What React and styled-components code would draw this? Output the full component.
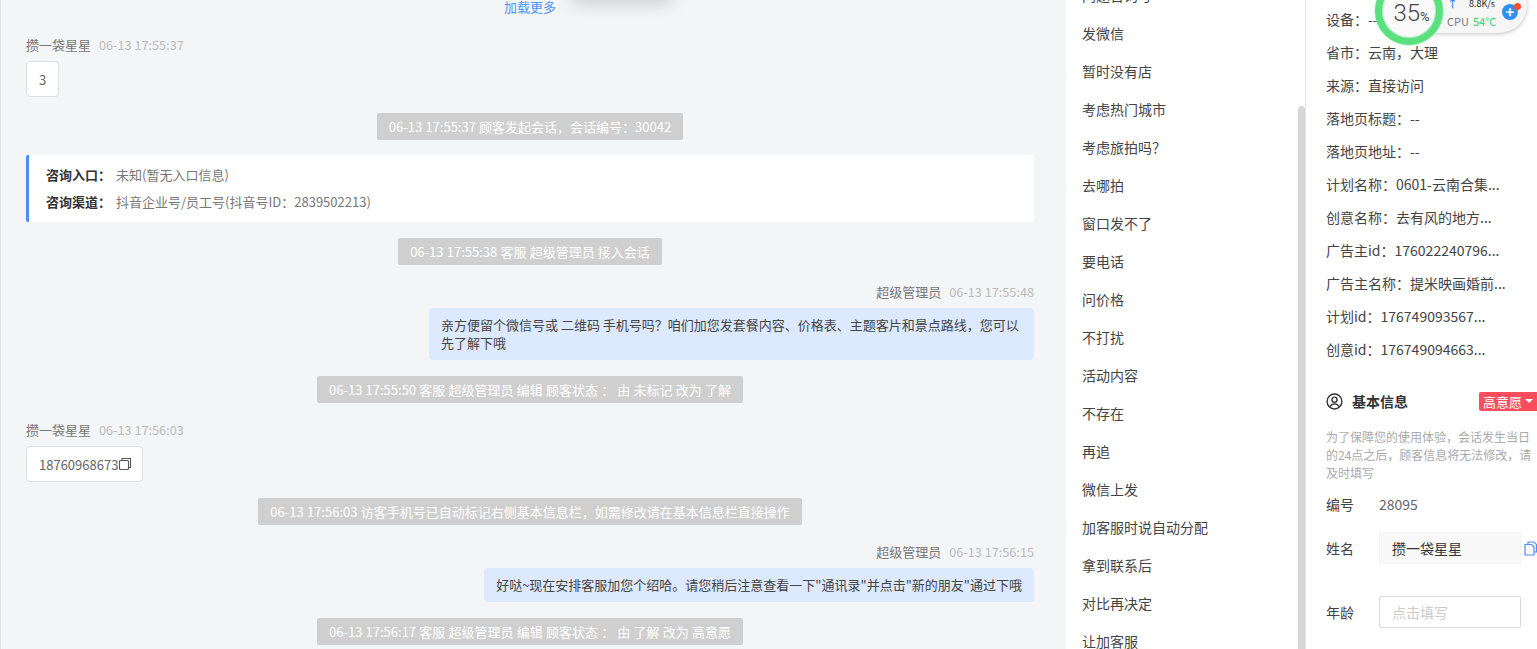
import React from "react";
import styled, { createGlobalStyle } from "styled-components";

// fullwidth punctuation, kept as escapes so it survives editors
const COLON = "\uFF1A";
const COMMA = "\uFF0C";
const QMARK = "\uFF1F";

const quickReplies = [
  "问题咨询号", "发微信", "暂时没有店", "考虑热门城市", `考虑旅拍吗${QMARK}`, "去哪拍", "窗口发不了", "要电话", "问价格",
  "不打扰", "活动内容", "不存在", "再追", "微信上发", "加客服时说自动分配", "拿到联系后", "对比再决定", "让加客服",
];

const visitorInfo = [
  `设备${COLON}--`,
  `省市${COLON}云南${COMMA}大理`,
  `来源${COLON}直接访问`,
  `落地页标题${COLON}--`,
  `落地页地址${COLON}--`,
  `计划名称${COLON}0601-云南合集...`,
  `创意名称${COLON}去有风的地方...`,
  `广告主id${COLON}176022240796...`,
  `广告主名称${COLON}提米映画婚前...`,
  `计划id${COLON}176749093567...`,
  `创意id${COLON}176749094663...`,
];

const GlobalStyle = createGlobalStyle`
  html, body { margin: 0; padding: 0; height: 100%; overflow: hidden; background: #fff; }
  body { font-family: "Noto Sans CJK SC", "Noto Sans", sans-serif; }
  * { box-sizing: border-box; }
`;

const Page = styled.div`
  display: grid;
  grid-template-columns: 1066px 240px 231px;
  height: 649px;
  overflow: hidden;
  position: relative;
`;

const ChatPane = styled.div`
  background: #f4f5f7;
  border-left: 1px solid #e2e2e2;
  padding: 0 32px 0 25px;
  overflow: hidden;
  position: relative;
`;

const TopShadow = styled.div`
  position: absolute;
  left: 575px;
  top: -30px;
  width: 92px;
  height: 30px;
  box-shadow: 0 0 18px 4px rgba(0, 0, 0, 0.16);
`;

const LoadMore = styled.div`
  text-align: center;
  font-size: 13px;
  line-height: 16px;
  color: #4d94ff;
  margin: -1px 0 22px;
`;

const MetaRow = styled.div`
  display: flex;
  gap: 8px;
  align-items: center;
  justify-content: ${(p) => (p.$mine ? "flex-end" : "flex-start")};
  height: 16px;
  padding-bottom: 2px;
  font-size: 13px;
  color: #777;
`;

const MetaTime = styled.span`
  font-size: 12.7px;
  color: #bbb;
`;

const VisitorBubble = styled.div`
  display: inline-flex;
  align-items: center;
  height: 36px;
  margin-top: 8px;
  padding: 0 12px;
  background: #fff;
  border: 1px solid #dcdfe6;
  border-radius: 4px;
  font-size: 13px;
  color: #666;
`;

const MineRow = styled.div`
  display: flex;
  justify-content: flex-end;
  margin-top: 8px;
`;

const MineBubble = styled.div`
  max-width: 605px;
  padding: 8px 12px;
  background: #dce9fe;
  border-radius: 4px;
  font-size: 13px;
  line-height: 18px;
  color: #444;
`;

const NoticeRow = styled.div`
  display: flex;
  justify-content: center;
  margin-top: ${(p) => p.$top}px;
`;

const Notice = styled.div`
  height: 27px;
  line-height: 27px;
  padding: 0 12px;
  background: #cfcfcf;
  border-radius: 2px;
  font-size: 13px;
  word-spacing: 0.3px;
  color: #fff;
  white-space: nowrap;
`;

const Entry = styled.div`
  margin-top: 15px;
  height: 67px;
  padding: 6px 17px;
  background: #fff;
  border-left: 3px solid #4d8dff;
  border-radius: 2px 0 0 2px;
  font-size: 13px;
  color: #777;
`;

const EntryLine = styled.div`
  height: 27px;
  line-height: 27px;
  b { color: #333; font-weight: 700; margin-right: 5px; }
`;

const Block = styled.div`
  margin-top: ${(p) => p.$top}px;
`;

const CopyGlyph = styled.svg`
  width: 14px;
  height: 14px;
  flex: none;
  margin-right: -2px;
`;

const MiddlePane = styled.div`
  position: relative;
  overflow: hidden;
  background: #fff;
  border-right: 1px solid #e6e6e6;
`;

const ReplyList = styled.div`
  margin-top: -24px;
`;

const ReplyItem = styled.div`
  height: 38px;
  line-height: 38px;
  padding-left: 16px;
  font-size: 14px;
  color: #444;
`;

const ScrollThumb = styled.div`
  position: absolute;
  right: 0;
  top: 106px;
  bottom: 0;
  width: 7px;
  border-radius: 4px 4px 0 0;
  background: #d6d6d6;
`;

const InfoPane = styled.div`
  background: #fff;
  padding: 0 0 0 20px;
  overflow: hidden;
`;

const InfoList = styled.div`
  margin-top: 3px;
`;

const InfoLine = styled.div`
  height: 33px;
  line-height: 33px;
  font-size: 14px;
  color: #444;
  white-space: nowrap;
`;

const SectionHead = styled.div`
  display: flex;
  align-items: center;
  margin-top: 24px;
  height: 22px;
  font-size: 14px;
  font-weight: 700;
  color: #333;
`;

const SectionTitle = styled.span`
  margin-left: 9px;
  flex: 1;
`;

const LevelTag = styled.span`
  display: flex;
  align-items: center;
  gap: 3px;
  width: 58px;
  height: 19px;
  padding-left: 4px;
  background: #fb4d5c;
  border-radius: 2px 0 0 2px;
  font-size: 13px;
  font-weight: 400;
  color: #fff;
`;

const Caret = styled.i`
  width: 0;
  height: 0;
  border: 4px solid transparent;
  border-top-color: #fff;
  border-bottom: 0;
`;

const Hint = styled.div`
  margin-top: 16px;
  padding-right: 4px;
  font-size: 12px;
  line-height: 18px;
  color: #aaa;
`;

const FieldRow = styled.div`
  display: flex;
  align-items: center;
  margin-top: ${(p) => p.$top}px;
  font-size: 14px;
  color: #444;
`;

const FieldLabel = styled.span`
  width: 53px;
  flex: none;
`;

const FieldValue = styled.span`
  color: #666;
`;

const NameBox = styled.div`
  width: 142px;
  height: 32px;
  line-height: 30px;
  padding-left: 12px;
  background: #f9f9f9;
  border: 1px solid #f4f4f4;
  border-radius: 2px;
  color: #333;
`;

const CopyButton = styled.svg`
  width: 13px;
  height: 15px;
  margin-left: 3px;
`;

const InputBox = styled.div`
  width: 142px;
  height: 32px;
  line-height: 30px;
  padding-left: 12px;
  border: 1px solid #d9d9d9;
  border-radius: 2px;
  color: #ccc;
`;

const Widget = styled.div`
  position: absolute;
  left: 1376px;
  top: -23px;
  width: 151px;
  height: 56px;
`;

const WidgetPill = styled.div`
  position: absolute;
  left: 30px;
  top: 0;
  right: 0;
  height: 56px;
  border-radius: 0 28px 28px 0;
  background: #f6f6f6;
  box-shadow: 0 1px 4px rgba(0, 0, 0, 0.25);
`;

const WidgetRing = styled.div`
  position: absolute;
  left: -1px;
  top: 0;
  width: 68px;
  height: 68px;
  border-radius: 50%;
  background: #fafafa;
  border: 7px solid #5ae07f;
  box-shadow: 0 0 3px #a5efb9, inset 0 0 2px #2fc765;
  display: flex;
  align-items: center;
  justify-content: center;
  padding: 4px 0 0 5px;
  font-family: Roboto, "Open Sans", sans-serif;
  font-size: 24px;
  font-weight: 300;
  color: #444;
  small { font-size: 13px; font-weight: 400; margin-top: 7px; }
`;

const Speed = styled.span`
  position: absolute;
  left: 93px;
  top: 20px;
  font-size: 9px;
  color: #222;
`;

const UpArrow = styled.span`
  position: absolute;
  left: 71px;
  top: 18px;
  font-size: 11px;
  font-weight: 700;
  color: #3b8df0;
`;

const Cpu = styled.span`
  position: absolute;
  left: 71px;
  top: 36px;
  font-size: 11px;
  color: #777;
  em { font-style: normal; color: #2fd06b; margin-left: 4px; }
`;

const PlusDot = styled.span`
  position: absolute;
  left: 126px;
  top: 27px;
  width: 16px;
  height: 16px;
  border-radius: 50%;
  background: #2f8ff5;
  color: #fff;
  font-size: 15px;
  font-weight: 700;
  line-height: 15px;
  text-align: center;
`;

const RedDot = styled.span`
  position: absolute;
  left: 138px;
  top: 26px;
  width: 7px;
  height: 7px;
  border-radius: 50%;
  background: #f4512c;
`;

function Meta({ name, time, mine }) {
  return (
    <MetaRow $mine={mine}>
      <span>{name}</span>
      <MetaTime>{time}</MetaTime>
    </MetaRow>
  );
}

function SystemNotice({ top, children }) {
  return (
    <NoticeRow $top={top}>
      <Notice>{children}</Notice>
    </NoticeRow>
  );
}

function Chat() {
  return (
    <ChatPane>
      <TopShadow />
      <LoadMore>加载更多</LoadMore>
      <Meta name="攒一袋星星" time="06-13 17:55:37" />
      <VisitorBubble>3</VisitorBubble>
      <SystemNotice top={16}>{`06-13 17:55:37 顾客发起会话${COMMA}会话编号${COLON}30042`}</SystemNotice>
      <Entry>
        <EntryLine><b>{`咨询入口${COLON}`}</b>未知(暂无入口信息)</EntryLine>
        <EntryLine><b>{`咨询渠道${COLON}`}</b>{`抖音企业号/员工号(抖音号ID${COLON}2839502213)`}</EntryLine>
      </Entry>
      <SystemNotice top={16}>06-13 17:55:38 客服 超级管理员 接入会话</SystemNotice>
      <Block $top={19}>
        <Meta mine name="超级管理员" time="06-13 17:55:48" />
        <MineRow>
          <MineBubble>{`亲方便留个微信号或 二维码 手机号吗${QMARK}咱们加您发套餐内容、价格表、主题客片和景点路线${COMMA}您可以先了解下哦`}</MineBubble>
        </MineRow>
      </Block>
      <SystemNotice top={16}>{`06-13 17:55:50 客服 超级管理员 编辑 顾客状态 ${COLON} 由 未标记 改为 了解`}</SystemNotice>
      <Block $top={19}>
        <Meta name="攒一袋星星" time="06-13 17:56:03" />
        <VisitorBubble>
          18760968673
          <CopyGlyph viewBox="0 0 14 14" fill="none" stroke="#555" strokeWidth="1.1">
            <rect x="1.5" y="3.5" width="9" height="9" rx="1" />
            <path d="M4 3.5V1.5h8.5v9h-2" />
          </CopyGlyph>
        </VisitorBubble>
      </Block>
      <SystemNotice top={16}>{`06-13 17:56:03 访客手机号已自动标记右侧基本信息栏${COMMA}如需修改请在基本信息栏直接操作`}</SystemNotice>
      <Block $top={19}>
        <Meta mine name="超级管理员" time="06-13 17:56:15" />
        <MineRow>
          <MineBubble>好哒~现在安排客服加您个绍哈。请您稍后注意查看一下"通讯录"并点击"新的朋友"通过下哦</MineBubble>
        </MineRow>
      </Block>
      <SystemNotice top={16}>{`06-13 17:56:17 客服 超级管理员 编辑 顾客状态 ${COLON} 由 了解 改为 高意愿`}</SystemNotice>
    </ChatPane>
  );
}

function Replies() {
  return (
    <MiddlePane>
      <ReplyList>
        {quickReplies.map((r) => (
          <ReplyItem key={r}>{r}</ReplyItem>
        ))}
      </ReplyList>
      <ScrollThumb />
    </MiddlePane>
  );
}

function Info() {
  return (
    <InfoPane>
      <InfoList>
        {visitorInfo.map((line) => (
          <InfoLine key={line}>{line}</InfoLine>
        ))}
      </InfoList>
      <SectionHead>
        <svg width="17" height="17" viewBox="0 0 16 16" fill="none" stroke="#333" strokeWidth="1.3">
          <circle cx="8" cy="8" r="7" />
          <circle cx="8" cy="6.3" r="2.4" />
          <path d="M3.6 13c1-2 2.6-2.8 4.4-2.8s3.4.8 4.4 2.8" />
        </svg>
        <SectionTitle>基本信息</SectionTitle>
        <LevelTag>高意愿<Caret /></LevelTag>
      </SectionHead>
      <Hint>{`为了保障您的使用体验${COMMA}会话发生当日的24点之后${COMMA}顾客信息将无法修改${COMMA}请及时填写`}</Hint>
      <FieldRow $top={12}>
        <FieldLabel>编号</FieldLabel>
        <FieldValue>28095</FieldValue>
      </FieldRow>
      <FieldRow $top={18}>
        <FieldLabel>姓名</FieldLabel>
        <NameBox>攒一袋星星</NameBox>
        <CopyButton viewBox="0 0 13 15" fill="#fff" stroke="#4d8dff" strokeWidth="1.2">
          <path d="M4 1h6l2.4 2.4V11H4z" />
          <path d="M1 3.5h6.5L10 6v8H1z" />
        </CopyButton>
      </FieldRow>
      <FieldRow $top={32}>
        <FieldLabel>年龄</FieldLabel>
        <InputBox>点击填写</InputBox>
      </FieldRow>
    </InfoPane>
  );
}

export default function App() {
  return (
    <>
      <GlobalStyle />
      <Page>
        <Chat />
        <Replies />
        <Info />
        <Widget>
          <WidgetPill />
          <WidgetRing>35<small>%</small></WidgetRing>
          <UpArrow>↑</UpArrow>
          <Speed>8.8K/s</Speed>
          <Cpu>CPU<em>54°C</em></Cpu>
          <PlusDot>+</PlusDot>
          <RedDot />
        </Widget>
      </Page>
    </>
  );
}
